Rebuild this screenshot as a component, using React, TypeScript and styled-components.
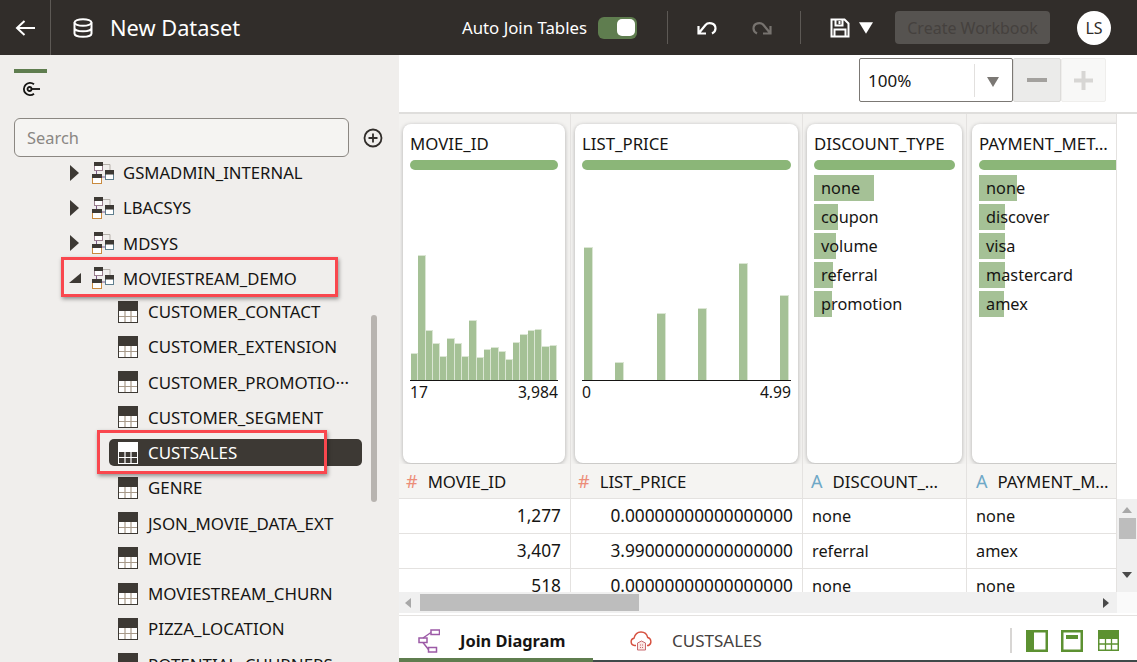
import React from "react";
import styled, { createGlobalStyle } from "styled-components";

const COLUMNS = "172px 232px 164px 150px";
const FONT = `"Noto Sans", "Open Sans", sans-serif`;

const GlobalStyle = createGlobalStyle`
  html, body {
    margin: 0;
    padding: 0;
    height: 662px;
    overflow: hidden;
    background: #fff;
    font-family: ${FONT};
    color: #161513;
  }
  * { box-sizing: border-box; }
`;

const Page = styled.div`
  display: flex;
  flex-direction: column;
  width: 1137px;
  height: 662px;
  overflow: hidden;
`;

/* header */
const Header = styled.header`
  display: flex;
  align-items: center;
  flex: 0 0 55px;
  background: #312d2a;
  color: #fff;
`;

const BackCell = styled.div`
  display: flex;
  align-items: center;
  justify-content: center;
  width: 51px;
  height: 55px;
  border-right: 1px solid #5d5955;
`;

const DatasetTitle = styled.h1`
  display: flex;
  align-items: center;
  gap: 17px;
  margin: 0 0 0 22px;
  font-size: 21.8px;
  font-weight: 400;
  line-height: 28px;
`;

const HeaderRight = styled.div`
  display: flex;
  align-items: center;
  margin-left: auto;
  height: 55px;
`;

const ToggleLabel = styled.span`
  font-size: 16.8px;
  margin-right: 11px;
`;

const Toggle = styled.div`
  display: flex;
  justify-content: flex-end;
  align-items: center;
  width: 39px;
  height: 22px;
  padding-right: 2px;
  border-radius: 6px;
  background: #5f7d4f;
`;

const ToggleThumb = styled.div`
  width: 18px;
  height: 17px;
  border-radius: 5px;
  background: #fff;
`;

const HeaderDivider = styled.div<{ $left: number; $right: number }>`
  width: 1px;
  height: 33px;
  background: #5d5955;
  margin: 0 ${(p) => p.$right}px 0 ${(p) => p.$left}px;
`;

const IconSlot = styled.span<{ $right?: number }>`
  display: inline-flex;
  margin-right: ${(p) => p.$right ?? 0}px;
`;

const CreateButton = styled.div`
  display: flex;
  align-items: center;
  justify-content: center;
  width: 155px;
  height: 33px;
  margin: 0 27px 0 22px;
  border-radius: 4px;
  background: #565350;
  color: #45413e;
  font-size: 16px;
`;

const Avatar = styled.div`
  display: flex;
  align-items: center;
  justify-content: center;
  width: 34px;
  height: 34px;
  margin-right: 26px;
  border-radius: 50%;
  background: #fff;
  color: #312d2a;
  font-size: 16px;
`;

/* sidebar */
const Body = styled.div`
  display: flex;
  flex: 1;
  min-height: 0;
`;

const Sidebar = styled.aside`
  display: flex;
  flex-direction: column;
  flex: 0 0 399px;
  background: #f0eeec;
  overflow: hidden;
`;

const SideTab = styled.div`
  display: flex;
  justify-content: center;
  flex: 0 0 49px;
  width: 33px;
  margin: 14px 0 0 14px;
  padding-top: 8px;
  border-top: 4px solid #5f7d4f;
`;

const SearchRow = styled.div`
  display: flex;
  align-items: center;
  flex: 0 0 39px;
  gap: 14px;
  margin-left: 14px;
`;

const SearchBox = styled.div`
  display: flex;
  align-items: center;
  width: 335px;
  height: 39px;
  padding-left: 12px;
  border: 1px solid #8b8782;
  border-radius: 6px;
  background: #f5f4f2;
  color: #8a8783;
  font-size: 16.4px;
`;

const Tree = styled.div`
  position: relative;
  flex: 0 0 auto;
  margin-top: -2px;
`;

const ThumbY = styled.div`
  position: absolute;
  left: 371px;
  top: 160px;
  width: 6px;
  height: 187px;
  border-radius: 3px;
  background: #b8b4b0;
`;

const SchemaRow = styled.div<{ $tight?: boolean }>`
  position: relative;
  display: flex;
  align-items: center;
  height: 35.25px;
  padding-left: 69px;
  margin-bottom: ${(p) => (p.$tight ? "-2px" : "0")};
  font-size: 16.7px;
`;

const Caret = styled.span`
  display: inline-flex;
  width: 13px;
  margin-right: 10px;
`;

const SchemaName = styled.span`
  margin-left: 9px;
`;

const TableRow = styled.div`
  position: relative;
  display: flex;
  align-items: center;
  height: 35.25px;
  padding-left: 109px;
  font-size: 16.9px;
`;

const TablePill = styled.div<{ $selected?: boolean }>`
  display: flex;
  align-items: center;
  gap: 10px;
  width: 253px;
  height: 27px;
  padding-left: 9px;
  border-radius: 5px;
  white-space: nowrap;
  background: ${(p) => (p.$selected ? "#3d3934" : "transparent")};
  color: ${(p) => (p.$selected ? "#fff" : "#161513")};
`;

const Callout = styled.div<{ $left: number; $top: number; $width: number; $height: number }>`
  position: absolute;
  left: ${(p) => p.$left}px;
  top: ${(p) => p.$top}px;
  width: ${(p) => p.$width}px;
  height: ${(p) => p.$height}px;
  border: 3px solid #f9474e;
  box-shadow: 1px 2px 4px rgba(0, 0, 0, 0.4);
  z-index: 2;
`;

/* right pane */
const Main = styled.main`
  display: flex;
  flex-direction: column;
  flex: 1;
  min-width: 0;
`;

const ZoomBar = styled.div`
  display: flex;
  justify-content: flex-end;
  flex: 0 0 59px;
  padding: 3px 31px 0 0;
  border-bottom: 2px solid #dfdedc;
  background: #fff;
`;

const ZoomSelect = styled.div`
  display: flex;
  align-items: center;
  width: 154px;
  height: 44px;
  padding-left: 8px;
  border: 1px solid #7b7874;
  border-radius: 2px;
  font-size: 17px;
`;

const ZoomValue = styled.span`
  width: 107px;
  line-height: 32px;
  padding-top: 1px;
  border-right: 1px solid #e2e0de;
`;

const ZoomCaret = styled.span`
  display: inline-flex;
  margin: 4px 0 0 12px;
`;

const ZoomButton = styled.div<{ $dim?: boolean }>`
  display: flex;
  align-items: center;
  justify-content: center;
  width: ${(p) => (p.$dim ? 45 : 48)}px;
  height: 44px;
  border: 1px solid ${(p) => (p.$dim ? "#efeeec" : "#dddcda")};
  border-radius: 2px;
  background: ${(p) => (p.$dim ? "#f8f8f7" : "#ebebea")};
  color: ${(p) => (p.$dim ? "#d7d6d4" : "#a3a19e")};
`;

const DataArea = styled.div`
  display: flex;
  flex: 0 0 478px;
  min-height: 0;
  overflow: hidden;
`;

const GridPane = styled.div`
  width: 718px;
  overflow: hidden;
`;

const ProfileRow = styled.div`
  display: grid;
  grid-template-columns: ${COLUMNS};
  height: 350px;
  background: #f3f2f0;
`;

const ProfileCell = styled.div<{ $pad: string }>`
  padding: ${(p) => p.$pad};
  border-right: 1px solid #e4e2e0;
  overflow: hidden;
`;

const Card = styled.div<{ $clip?: boolean }>`
  display: flex;
  flex-direction: column;
  height: 339px;
  width: ${(p) => (p.$clip ? "165px" : "auto")};
  padding: 10px 7px 0;
  border-radius: 8px;
  background: #fff;
  box-shadow: 0 1px 4px rgba(0, 0, 0, 0.28);
`;

const CardTitle = styled.div`
  height: 20px;
  font-size: 16.8px;
  line-height: 20px;
  white-space: nowrap;
`;

const FillBar = styled.div`
  flex: 0 0 10px;
  margin-top: 6px;
  border-radius: 5px;
  background: #8bb678;
`;

const Chart = styled.div`
  display: flex;
  align-items: flex-end;
  height: 205px;
  margin-top: 5px;
`;

const HistBar = styled.div<{ $width: number }>`
  flex: 0 0 ${(p) => p.$width}px;
  background: #a5c196;
  border: solid #dbe6d4;
  border-width: 1px 1px 0 0;
`;

const TightChart = styled(Chart)`
  padding: 0 1px;
`;

const Axis = styled.div`
  height: 1px;
  background: #161513;
`;

const AxisLabels = styled.div`
  display: flex;
  justify-content: space-between;
  margin-top: 1px;
  font-size: 15.7px;
  line-height: 20px;
`;

const CategoryList = styled.div`
  display: flex;
  flex-direction: column;
  gap: 3px;
  margin-top: 5px;
`;

const Category = styled.div`
  position: relative;
  height: 26px;
  padding-left: 7px;
  font-size: 16.3px;
  line-height: 26px;
`;

const CategoryFill = styled.div`
  position: absolute;
  left: 0;
  top: 0;
  bottom: 0;
  background: #a5c196;
`;

const CategoryText = styled.span`
  position: relative;
`;

const HeadRow = styled.div`
  display: grid;
  grid-template-columns: ${COLUMNS};
  height: 35px;
  border-bottom: 1px solid #e4e2e0;
  background: #f5f4f2;
`;

const HeadCell = styled.div<{ $pad: number }>`
  display: flex;
  align-items: center;
  gap: 10px;
  padding-left: ${(p) => p.$pad}px;
  border-right: 1px solid #e4e2e0;
  font-size: 16.8px;
  white-space: nowrap;
  overflow: hidden;
`;

const TypeMark = styled.span<{ $text?: boolean }>`
  font-size: 18px;
  color: ${(p) => (p.$text ? "#6fa8c7" : "#ec8d78")};
`;

const DataRow = styled.div`
  display: grid;
  grid-template-columns: ${COLUMNS};
  height: 35px;
  border-bottom: 1px solid #e4e2e0;
`;

const DataCell = styled.div<{ $num?: boolean }>`
  padding: 0 9px;
  border-right: 1px solid #e4e2e0;
  font-size: ${(p) => (p.$num ? 17.3 : 16.3)}px;
  line-height: 34px;
  text-align: ${(p) => (p.$num ? "right" : "left")};
  white-space: nowrap;
  overflow: hidden;
`;

const VScrollColumn = styled.div`
  display: flex;
  flex-direction: column;
  width: 20px;
`;

const VScrollSpacer = styled.div`
  flex: 0 0 385px;
`;

const VScrollTrack = styled.div`
  display: flex;
  flex-direction: column;
  align-items: center;
  height: 93px;
  background: #f0f0f0;
  padding-top: 8px;
`;

const VThumb = styled.div`
  width: 17px;
  height: 21px;
  margin: 5px 0 33px;
  background: #bdbdbd;
`;

const HScroll = styled.div`
  display: flex;
  align-items: center;
  flex: 0 0 21px;
  background: #f0f0f0;
`;

const HThumb = styled.div`
  width: 219px;
  height: 17px;
  margin-left: 9px;
  background: #bdbdbd;
`;

const HScrollEnd = styled.span`
  display: inline-flex;
  margin: 0 0 0 464px;
`;

const ScrollArrowLeft = styled.span`
  display: inline-flex;
  margin-left: 6px;
`;

const HCorner = styled.div`
  width: 20px;
  height: 21px;
  margin-left: auto;
  background: #fafafa;
`;

const TabBar = styled.div`
  display: flex;
  align-items: stretch;
  flex: 1;
  margin-top: 2px;
  border-top: 1px solid #e4e2e0;
  border-bottom: 2px solid #3f4a4a;
`;

const Tab = styled.div<{ $active?: boolean }>`
  display: flex;
  align-items: center;
  width: ${(p) => (p.$active ? 194 : 230)}px;
  padding: 7px 0 0 ${(p) => (p.$active ? 19 : 37)}px;
  gap: ${(p) => (p.$active ? 20 : 19)}px;
  margin-bottom: -2px;
  border-bottom: 4px solid ${(p) => (p.$active ? "#5f7d4f" : "transparent")};
  font-size: ${(p) => (p.$active ? 16.4 : 17)}px;
  font-weight: ${(p) => (p.$active ? 700 : 400)};
  color: ${(p) => (p.$active ? "#161513" : "#45413e")};
`;

const TabTools = styled.div`
  display: flex;
  align-items: center;
  margin: 0 18px 0 auto;
  padding-top: 5px;
`;

const ToolDivider = styled.div`
  width: 2px;
  height: 25px;
  margin-right: 14px;
  background: #d8d6d4;
`;

const ToolSlot = styled.span<{ $right?: number }>`
  display: inline-flex;
  margin-right: ${(p) => p.$right ?? 0}px;
`;

/* drawings */
const Back = () => (
  <svg width="20" height="18" viewBox="0 0 20 18" fill="none" stroke="#fff" strokeWidth="2">
    <path d="M20 9H2M9.500 2 2 9l7.500 7" />
  </svg>
);

const DatabaseIcon = () => (
  <svg width="20" height="20" viewBox="0 0 20 20" fill="none" stroke="#fff" strokeWidth="2">
    <ellipse cx="10" cy="4.500" rx="8.500" ry="3.300" />
    <path d="M1.500 4.500v11c0 1.900 3.800 3.300 8.500 3.300s8.500-1.400 8.500-3.300v-11M1.500 10c0 1.900 3.800 3.300 8.500 3.300s8.500-1.400 8.500-3.300" />
  </svg>
);

const Undo = () => (
  <svg width="20" height="15" viewBox="0 0 20 15" fill="none" stroke="#fff" strokeWidth="2.200">
    <path d="M1.500 6v7.500H9M1.500 13.500 8.500 5C11 2 18.500 2.500 18.500 8.500c0 2.500-1.500 4-3.500 5" />
  </svg>
);

const Redo = () => (
  <svg width="20" height="15" viewBox="0 0 20 15" fill="none" stroke="#77736f" strokeWidth="2.200">
    <path d="M18.500 6v7.500H11M18.500 13.500 11.500 5C9 2 1.500 2.500 1.500 8.500c0 2.500 1.500 4 3.500 5" />
  </svg>
);

const SaveIcon = () => (
  <svg width="20" height="20" viewBox="0 0 20 20" fill="none" stroke="#fff" strokeWidth="2">
    <path d="M1.500 1.500h13l4 4v13h-17zM5.500 1.500v6h7v-6M9.500 3v3M4.500 18.500v-7h11v7" />
  </svg>
);

const Triangle = ({ color, size }: { color: string; size: number }) => (
  <svg width={size} height={size - 2} viewBox="0 0 12 10" fill={color}>
    <path d="M0 0h12L6 10z" />
  </svg>
);

const SourceIcon = () => (
  <svg width="20" height="16" viewBox="0 0 20 16" fill="none" stroke="#161513" strokeWidth="1.800">
    <path d="M13 3.200A6.200 6.200 0 1 0 13 12.800" />
    <circle cx="8.500" cy="8" r="2" />
    <path d="M10.500 8H19" />
  </svg>
);

const PlusCircle = () => (
  <svg width="20" height="20" viewBox="0 0 20 20" fill="none" stroke="#312d2a" strokeWidth="1.800">
    <circle cx="10" cy="10" r="8.500" />
    <path d="M10 5.500v9M5.500 10h9" />
  </svg>
);

const CaretRight = () => (
  <svg width="11" height="16" viewBox="0 0 11 16" fill="#3d3934">
    <path d="M1 0l9 8-9 8z" />
  </svg>
);

const CaretOpen = () => (
  <svg width="12" height="10" viewBox="0 0 12 10" fill="#3d3934">
    <path d="M12 0v10H0z" />
  </svg>
);

const SchemaIcon = () => (
  <svg width="22" height="22" viewBox="0 0 22 22" fill="none">
    <path d="M11 2.500h7v5.500" stroke="#b5b0aa" strokeWidth="1" />
    <path d="M4.500 9v3M10 15h3.500" stroke="#7d5a8a" strokeWidth="1" />
    <rect x="2.500" y="0.500" width="8" height="8" stroke="#9b7f8f" fill="#fff" />
    <rect x="2" y="0" width="9" height="4" fill="#3d3934" />
    <rect x="13.500" y="8.500" width="8" height="9" stroke="#5f7f8f" fill="#fff" />
    <rect x="13" y="8" width="9" height="4.500" fill="#3d3934" />
    <rect x="0.500" y="12.500" width="9" height="9" stroke="#c98a3e" fill="#fff" />
    <rect x="0" y="12" width="10" height="4" fill="#3d3934" />
  </svg>
);

const TableIcon = ({ selected }: { selected?: boolean }) => {
  const head = selected ? "#fff" : "#3d3934";
  const line = selected ? "#fff" : "#a89a8a";
  const cell = selected ? "#3d3934" : "#fff";
  return (
    <svg width="20" height="22" viewBox="0 0 20 22">
      <rect width="20" height="22" fill={head} />
      <rect x="1" y="10" width="18" height="11" fill={cell} />
      <path d="M7 10v11M13 10v11M1 15.500h18" stroke={line} strokeWidth="1.200" />
    </svg>
  );
};

const JoinIcon = () => (
  <svg width="22" height="24" viewBox="0 0 22 24" fill="none" stroke="#9c5aa6" strokeWidth="1.500">
    <rect x="13" y="1" width="8.500" height="4.500" />
    <rect x="1" y="9" width="8" height="4.500" />
    <rect x="10.500" y="18.500" width="8" height="4.500" />
    <path d="M13 3.500 5 9M5 13.500l5.500 7" />
  </svg>
);

const CloudIcon = () => (
  <svg width="23" height="20" viewBox="0 0 23 20" fill="none" stroke="#d6503f" strokeWidth="1.400">
    <path d="M6 14.500H4.500A3.700 3.700 0 0 1 4 7.200C5 3 8 1 11 1c3.500 0 6 2.300 6.700 5.500a4.300 4.300 0 0 1 .8 8H17" />
    <path d="M7.500 19v-7l4-2 4 2v7z" fill="#fbe7e4" stroke="#c96a70" strokeWidth="1" />
    <path d="M10 14h3M10 16.500h3" stroke="#c96a70" strokeWidth="1.200" strokeDasharray="1 1" />
  </svg>
);

const PaneLeftIcon = () => (
  <svg width="22" height="22" viewBox="0 0 22 22">
    <rect width="22" height="22" fill="#5c9131" />
    <rect x="8" y="2.500" width="11.500" height="17" fill="#fff" />
  </svg>
);

const PaneTopIcon = () => (
  <svg width="22" height="22" viewBox="0 0 22 22">
    <rect width="22" height="22" fill="#5c9131" />
    <rect x="2.500" y="2.500" width="17" height="17" fill="#fff" />
    <rect x="5" y="5" width="12" height="4" fill="#5c9131" />
  </svg>
);

const PaneTableIcon = () => (
  <svg width="21" height="21" viewBox="0 0 21 21">
    <rect width="21" height="21" fill="#5c9131" />
    <rect x="1.500" y="9" width="18" height="10.500" fill="#fff" />
    <path d="M7.500 9v11M13.500 9v11M1 14h19" stroke="#5c9131" strokeWidth="1.300" />
  </svg>
);

const schemasAbove = ["GSMADMIN_INTERNAL", "LBACSYS", "MDSYS"];
const tablesAbove = [
  "CUSTOMER_CONTACT",
  "CUSTOMER_EXTENSION",
  "CUSTOMER_PROMOTIO\u00b7\u00b7\u00b7",
  "CUSTOMER_SEGMENT",
];
const tablesBelow = [
  "GENRE",
  "JSON_MOVIE_DATA_EXT",
  "MOVIE",
  "MOVIESTREAM_CHURN",
  "PIZZA_LOCATION",
  "POTENTIAL_CHURNERS",
];

const movieBars = [27, 125, 50, 37, 24, 42, 37, 24, 60, 23, 31, 33, 29, 21, 38, 46, 50, 51, 34, 35];
// height and distance from the previous bar
const priceBars = [
  [133, 2],
  [18, 22],
  [67, 33],
  [72, 32],
  [117, 32],
  [85, 32],
];
const discounts: [string, number][] = [
  ["none", 60],
  ["coupon", 24],
  ["volume", 22],
  ["referral", 19],
  ["promotion", 18],
];
const payments: [string, number][] = [
  ["none", 38],
  ["discover", 26],
  ["visa", 26],
  ["mastercard", 26],
  ["amex", 25],
];
const rows = [
  ["1,277", "0.00000000000000000", "none", "none"],
  ["3,407", "3.99000000000000000", "referral", "amex"],
  ["518", "0.00000000000000000", "none", "none"],
];

const CategoryBars = ({ items }: { items: [string, number][] }) => (
  <CategoryList>
    {items.map(([label, width]) => (
      <Category key={label}>
        <CategoryFill style={{ width }} />
        <CategoryText>{label}</CategoryText>
      </Category>
    ))}
  </CategoryList>
);

export default function App() {
  return (
    <Page>
      <GlobalStyle />
      <Header>
        <BackCell>
          <Back />
        </BackCell>
        <DatasetTitle>
          <DatabaseIcon />
          New Dataset
        </DatasetTitle>
        <HeaderRight>
          <ToggleLabel>Auto Join Tables</ToggleLabel>
          <Toggle>
            <ToggleThumb />
          </Toggle>
          <HeaderDivider $left={30} $right={29} />
          <IconSlot $right={35}>
            <Undo />
          </IconSlot>
          <IconSlot>
            <Redo />
          </IconSlot>
          <HeaderDivider $left={28} $right={29} />
          <IconSlot $right={9}>
            <SaveIcon />
          </IconSlot>
          <IconSlot>
            <Triangle color="#fff" size={14} />
          </IconSlot>
          <CreateButton>Create Workbook</CreateButton>
          <Avatar>LS</Avatar>
        </HeaderRight>
      </Header>
      <Body>
        <Sidebar>
          <SideTab>
            <SourceIcon />
          </SideTab>
          <SearchRow>
            <SearchBox>Search</SearchBox>
            <PlusCircle />
          </SearchRow>
          <Tree>
            {schemasAbove.map((name) => (
              <SchemaRow key={name}>
                <Caret>
                  <CaretRight />
                </Caret>
                <SchemaIcon />
                <SchemaName>{name}</SchemaName>
              </SchemaRow>
            ))}
            <SchemaRow $tight>
              <Caret>
                <CaretOpen />
              </Caret>
              <SchemaIcon />
              <SchemaName>MOVIESTREAM_DEMO</SchemaName>
              <Callout $left={61} $top={-4} $width={277} $height={40} />
            </SchemaRow>
            {tablesAbove.map((name) => (
              <TableRow key={name}>
                <TablePill>
                  <TableIcon />
                  {name}
                </TablePill>
              </TableRow>
            ))}
            <TableRow>
              <TablePill $selected>
                <TableIcon selected />
                CUSTSALES
              </TablePill>
              <Callout $left={97} $top={-5} $width={230} $height={44} />
            </TableRow>
            {tablesBelow.map((name) => (
              <TableRow key={name}>
                <TablePill>
                  <TableIcon />
                  {name}
                </TablePill>
              </TableRow>
            ))}
            <ThumbY />
          </Tree>
        </Sidebar>
        <Main>
          <ZoomBar>
            <ZoomSelect>
              <ZoomValue>100%</ZoomValue>
              <ZoomCaret>
                <Triangle color="#7b7874" size={12} />
              </ZoomCaret>
            </ZoomSelect>
            <ZoomButton>
              <svg width="20" height="4" viewBox="0 0 20 4" fill="currentColor">
                <rect width="20" height="4" />
              </svg>
            </ZoomButton>
            <ZoomButton $dim>
              <svg width="19" height="19" viewBox="0 0 19 19" fill="currentColor">
                <path d="M7.500 0h4v7.500H19v4h-7.500V19h-4v-7.500H0v-4h7.500z" />
              </svg>
            </ZoomButton>
          </ZoomBar>
          <DataArea>
            <GridPane>
              <ProfileRow>
                <ProfileCell $pad="10px 5px 0 4px">
                  <Card>
                    <CardTitle>MOVIE_ID</CardTitle>
                    <FillBar />
                    <TightChart>
                      {movieBars.map((h, i) => (
                        <HistBar key={i} $width={7.3} style={{ height: h }} />
                      ))}
                    </TightChart>
                    <Axis />
                    <AxisLabels>
                      <span>17</span>
                      <span>3,984</span>
                    </AxisLabels>
                  </Card>
                </ProfileCell>
                <ProfileCell $pad="10px 4px 0 4px">
                  <Card>
                    <CardTitle>LIST_PRICE</CardTitle>
                    <FillBar />
                    <Chart>
                      {priceBars.map(([h, gap], i) => (
                        <HistBar key={i} $width={9} style={{ height: h, marginLeft: gap }} />
                      ))}
                    </Chart>
                    <Axis />
                    <AxisLabels>
                      <span>0</span>
                      <span>4.99</span>
                    </AxisLabels>
                  </Card>
                </ProfileCell>
                <ProfileCell $pad="10px 4px 0 4px">
                  <Card>
                    <CardTitle>DISCOUNT_TYPE</CardTitle>
                    <FillBar />
                    <CategoryBars items={discounts} />
                  </Card>
                </ProfileCell>
                <ProfileCell $pad="10px 0 0 5px">
                  <Card $clip>
                    <CardTitle>PAYMENT_MET…</CardTitle>
                    <FillBar />
                    <CategoryBars items={payments} />
                  </Card>
                </ProfileCell>
              </ProfileRow>
              <HeadRow>
                <HeadCell $pad={7}>
                  <TypeMark>#</TypeMark>MOVIE_ID
                </HeadCell>
                <HeadCell $pad={7}>
                  <TypeMark>#</TypeMark>LIST_PRICE
                </HeadCell>
                <HeadCell $pad={8}>
                  <TypeMark $text>A</TypeMark>DISCOUNT_…
                </HeadCell>
                <HeadCell $pad={9}>
                  <TypeMark $text>A</TypeMark>PAYMENT_M…
                </HeadCell>
              </HeadRow>
              {rows.map((row, i) => (
                <DataRow key={i}>
                  <DataCell $num>{row[0]}</DataCell>
                  <DataCell $num>{row[1]}</DataCell>
                  <DataCell>{row[2]}</DataCell>
                  <DataCell>{row[3]}</DataCell>
                </DataRow>
              ))}
            </GridPane>
            <VScrollColumn>
              <VScrollSpacer />
              <VScrollTrack>
                <svg width="10" height="6" viewBox="0 0 10 6" fill="#a8a8a8">
                  <path d="M5 0l5 6H0z" />
                </svg>
                <VThumb />
                <svg width="10" height="6" viewBox="0 0 10 6" fill="#4a4a4a">
                  <path d="M0 0h10L5 6z" />
                </svg>
              </VScrollTrack>
            </VScrollColumn>
          </DataArea>
          <HScroll>
            <ScrollArrowLeft>
              <svg width="6" height="10" viewBox="0 0 6 10" fill="#a8a8a8">
                <path d="M6 0v10L0 5z" />
              </svg>
            </ScrollArrowLeft>
            <HThumb />
            <HScrollEnd>
              <svg width="6" height="10" viewBox="0 0 6 10" fill="#4a4a4a">
                <path d="M0 0l6 5-6 5z" />
              </svg>
            </HScrollEnd>
            <HCorner />
          </HScroll>
          <TabBar>
            <Tab $active>
              <JoinIcon />
              Join Diagram
            </Tab>
            <Tab>
              <CloudIcon />
              CUSTSALES
            </Tab>
            <TabTools>
              <ToolDivider />
              <ToolSlot $right={13}>
                <PaneLeftIcon />
              </ToolSlot>
              <ToolSlot $right={15}>
                <PaneTopIcon />
              </ToolSlot>
              <ToolSlot>
                <PaneTableIcon />
              </ToolSlot>
            </TabTools>
          </TabBar>
        </Main>
      </Body>
    </Page>
  );
}
